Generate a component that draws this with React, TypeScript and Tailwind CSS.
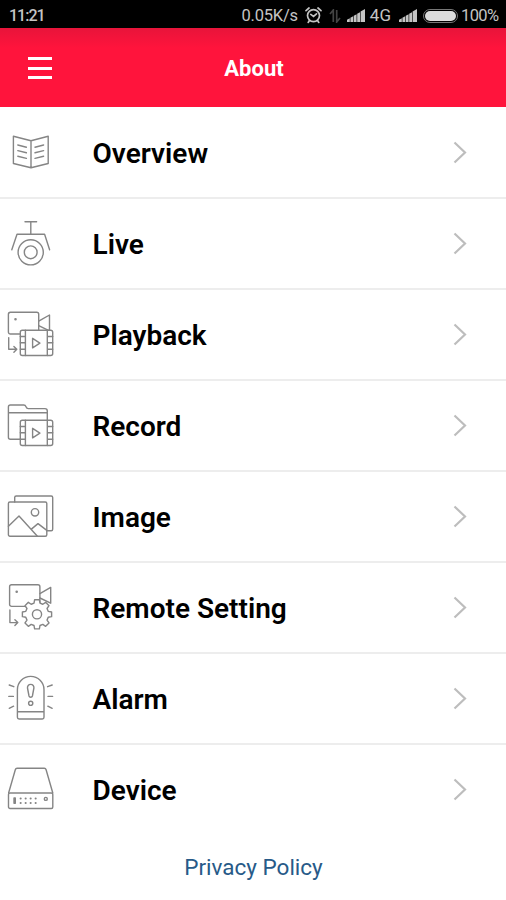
import type { ReactNode } from "react";

type MenuItem = {
  label: string;
  icon: ReactNode;
};

function Icon({ children }: { children: ReactNode }) {
  return (
    <svg
      className="h-12 w-12 shrink-0"
      viewBox="0 0 48 48"
      fill="none"
      stroke="#858585"
      strokeWidth="1.4"
      strokeLinejoin="round"
      strokeLinecap="round"
    >
      {children}
    </svg>
  );
}

// Film strip shared by the playback and record icons
function Film() {
  return (
    <g>
      <rect x="13.3" y="20.3" width="32.4" height="25.2" rx="2" fill="#fff" />
      <path d="M18.4 20.3v25.2M40.3 20.3v25.2M13.3 26.5h5M13.3 32.8h5M13.3 39.2h5M40.3 26.5h5.4M40.3 32.8h5.4M40.3 39.2h5.4" />
      <path d="M25.6 28.3v9.6l7.3-4.8z" />
    </g>
  );
}

function Camera() {
  return (
    <g>
      <rect x="1.4" y="2.3" width="30.3" height="21.7" rx="2" />
      <path d="M31.7 11.2L42.5 5v15.8L31.7 15.6" />
      <circle cx="8.5" cy="9.3" r="0.6" />
    </g>
  );
}

function gearPath(cx: number, cy: number) {
  const teeth = 8;
  const points: string[] = [];
  for (let i = 0; i < teeth; i++) {
    const a = (i * 2 * Math.PI) / teeth;
    [
      [-0.26, 11.6],
      [-0.16, 14.8],
      [0.16, 14.8],
      [0.26, 11.6],
    ].forEach(([d, r]) => {
      points.push(`${(cx + r * Math.sin(a + d)).toFixed(2)} ${(cy - r * Math.cos(a + d)).toFixed(2)}`);
    });
  }
  return `M${points.join("L")}Z`;
}

const items: MenuItem[] = [
  {
    label: "Overview",
    icon: (
      <Icon>
        <path d="M6.4 8.3L24 12.8l17.2-4.5v27.2L24 39.8 6.4 35.5zM24 12.8v27" />
        <path d="M10.8 17l8.6 2.2M10.8 22.6l8.6 2.2M10.8 28.2l8.6 2.2M36.6 17L28 19.2M36.6 22.6L28 24.8M36.6 28.2L28 30.4" />
      </Icon>
    ),
  },
  {
    label: "Live",
    icon: (
      <Icon>
        <path d="M18 2.8h11.6M23.8 2.8v12.5M4.8 30.8l5.2-15.5h27.6l5 15.5" />
        <circle cx="23.7" cy="33.3" r="12.6" />
        <circle cx="23.7" cy="33.3" r="6.4" />
      </Icon>
    ),
  },
  {
    label: "Playback",
    icon: (
      <Icon>
        <Camera />
        <path d="M1.7 27.6v11.7h7.9M6.9 36.4l2.9 2.9-2.9 2.9" />
        <Film />
      </Icon>
    ),
  },
  {
    label: "Record",
    icon: (
      <Icon>
        <path d="M1.4 11.7V6q0-2 2-2h13.4q1.5 0 2.2 1.8t2.2 1.8H38q2.3 0 2.3 2.3v10M1.4 11.7h38.9M1.4 11.7v24.6q0 2 2 2h10" />
        <g transform="translate(0 -1)">
          <Film />
        </g>
      </Icon>
    ),
  },
  {
    label: "Image",
    icon: (
      <Icon>
        <rect x="1.4" y="10" width="38.4" height="34.3" rx="1.5" />
        <path d="M7.7 10V5.5Q7.7 4 9.2 4h35q1.5 0 1.5 1.5v31.7q0 1.5-1.5 1.5h-4.4" />
        <path d="M1.4 34.3L12 24l18.4 20.3M24.7 36.9l6.3-5.3 8.8 6.8" />
        <circle cx="28" cy="20.3" r="3.7" />
      </Icon>
    ),
  },
  {
    label: "Remote Setting",
    icon: (
      <Icon>
        <g transform="translate(1.2 -0.6)">
          <Camera />
        </g>
        <path d="M2.9 27v12.6h7.4M7.9 36.7l2.9 2.9-2.9 2.9" />
        <path d={gearPath(30, 31.3)} fill="#fff" />
        <circle cx="30" cy="31.3" r="4.6" />
      </Icon>
    ),
  },
  {
    label: "Alarm",
    icon: (
      <Icon>
        <path d="M10.4 15.7a13.3 13.3 0 0 1 26.6 0v27.6q0 1.7-1.7 1.7H12.1q-1.7 0-1.7-1.7zM10.4 37.7H37" />
        <path d="M23.7 10.4c-2.2 0-3.4 1.6-3.2 3.6l1.5 8q.3 1.2 1.7 1.2t1.7-1.2l1.5-8c.2-2-1-3.6-3.2-3.6z" />
        <circle cx="23.7" cy="29.3" r="2.1" />
        <path d="M2.2 11l4.6 1.7M1.8 22.4h4.6M2.2 34.3l4.4-2.1M45.2 11l-4.6 1.7M45.6 22.4H41M45.2 34.3l-4.4-2.1" />
      </Icon>
    ),
  },
  {
    label: "Device",
    icon: (
      <Icon>
        <path d="M1.6 28L8.3 4.7q.4-1.4 1.8-1.4h27.2q1.4 0 1.8 1.4L45.8 28" />
        <rect x="1.5" y="28" width="44.3" height="15.5" rx="1.5" />
        <rect x="7" y="33" width="1.3" height="5.2" />
        <path d="M13.6 33.6h.1M18.6 33.6h.1M23.6 33.6h.1M28.6 33.6h.1M13.6 37.9h.1M18.6 37.9h.1M23.6 37.9h.1M28.6 37.9h.1" strokeWidth="2" />
        <circle cx="38.8" cy="33.9" r="1.5" />
      </Icon>
    ),
  },
];

function Signal() {
  return (
    <svg className="h-[13px] w-[18px]" viewBox="0 0 18 13" fill="#c4c4c4">
      <path d="M0 13v-2.2l2.8-1.6V13zM3.4 13V8.8l2.8-1.6V13zM6.8 13V6.8l2.8-1.6V13zM10.2 13V4.8l2.8-1.6V13zM13.6 13V2.6L18 0v13z" />
    </svg>
  );
}

function StatusBar() {
  return (
    <div className="flex h-7 items-center bg-black pt-[3px] pr-[7px] pl-[9px] text-[17px] leading-none text-[#c4c4c4]">
      <span className="text-[16px] font-medium tracking-[-1px] whitespace-nowrap">11:21</span>
      <span className="ml-auto pt-px text-[16.5px] tracking-[-0.2px] whitespace-nowrap">0.05K/s</span>
      <svg className="ml-[7px] h-[17px] w-[17px]" viewBox="0 0 17 17" fill="none" stroke="#c4c4c4" strokeWidth="1.7" strokeLinecap="round">
        <circle cx="8.5" cy="8.6" r="6" />
        <path d="M1 3.6L4 1M16 3.6L13 1M5.8 7.4l2.7 2 3-2.6M4.5 13.6l-1.3 1.8M12.5 13.6l1.3 1.8" />
      </svg>
      <svg className="ml-[7px] h-[14px] w-[12px]" viewBox="0 0 12 14" fill="none" stroke="#444" strokeWidth="1.7">
        <path d="M4.3 13V1L1 5M7.7 1v12L11 9" />
      </svg>
      <div className="ml-[6px]">
        <Signal />
      </div>
      <span className="ml-[5px] whitespace-nowrap">4G</span>
      <div className="ml-2">
        <Signal />
      </div>
      <div className="ml-[6px] flex h-[14px] w-[35px] items-center rounded-full border border-[#777] p-px">
        <div className="h-full w-full rounded-full bg-[#dcdcdc]" />
      </div>
      <span className="ml-[3px] w-[38px] pt-px text-[16.5px] tracking-[-0.6px] whitespace-nowrap">100%</span>
    </div>
  );
}

export default function App() {
  return (
    <div className="flex h-[900px] w-full flex-col bg-white font-[Roboto,sans-serif]">
      <StatusBar />

      <header className="grid h-[79px] grid-cols-[1fr_auto_1fr] items-center bg-[linear-gradient(#e8143a,#ff143c_20px)] pt-0.5 pl-0.5 text-white">
        <button className="mb-px ml-[26px] flex w-6 flex-col gap-[6.5px]" aria-label="Menu">
          <span className="h-[3px] w-full bg-white" />
          <span className="h-[3px] w-full bg-white" />
          <span className="h-[3px] w-full bg-white" />
        </button>
        <h1 className="text-[22px] font-bold">About</h1>
      </header>

      <ul className="pt-px">
        {items.map((item) => (
          <li
            key={item.label}
            className="flex h-[91px] items-center border-b-2 border-[#ededed] pr-[38px] pb-px pl-[7px] last:border-transparent"
          >
            {item.icon}
            <span className="ml-[37.5px] flex-1 pt-[3px] text-[28px] font-semibold whitespace-nowrap text-black">
              {item.label}
            </span>
            <svg className="h-6 w-4" viewBox="0 0 16 24" fill="none" stroke="#bdbdbd" strokeWidth="2.2">
              <path d="M2.5 2.5L13 12.5 2.5 22.5" />
            </svg>
          </li>
        ))}
      </ul>

      <a href="#privacy" className="mt-[15px] ml-px self-center text-[22.5px] text-[#275a88]">
        Privacy Policy
      </a>
    </div>
  );
}
